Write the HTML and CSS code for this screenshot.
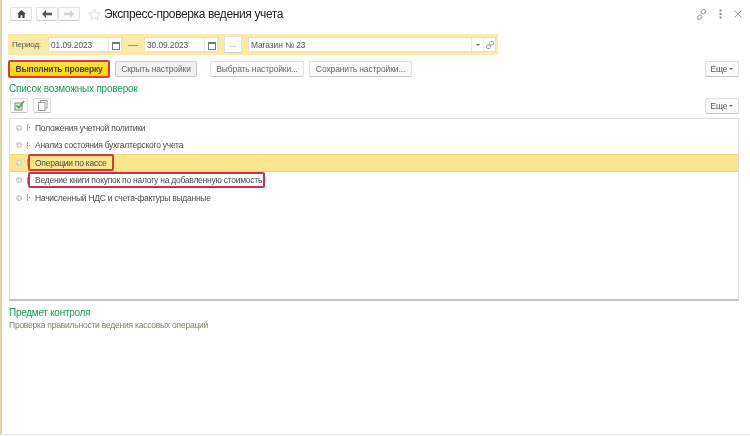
FILE: index.html
```html
<!DOCTYPE html>
<html lang="ru">
<head>
<meta charset="utf-8">
<title>Экспресс-проверка ведения учета</title>
<link rel="stylesheet" href="styles.css">
</head>
<body>
<div class="page">
  <header class="head">
    <button class="tb home"><svg width="9" height="8" viewBox="0 0 10 9"><path d="M5 0 0 4.500h1.500V9h2.500V6h2v3h2.500V4.500H10z" fill="#444"/></svg></button>
    <div class="nav">
      <button class="tb nb"><svg width="10" height="8" viewBox="0 0 10 8"><path d="M4 0 0 4l4 4V5.200h6V2.800H4z" fill="#555"/></svg></button>
      <button class="tb nb"><svg width="10" height="8" viewBox="0 0 10 8"><path d="M6 0l4 4-4 4V5.200H0V2.800h6z" fill="#d4d4d4"/></svg></button>
    </div>
    <svg class="star" width="13" height="13" viewBox="0 0 13 13"><path d="M6.500 1 8.200 4.800l4.100.4-3.100 2.700.9 4-3.600-2.100-3.600 2.100.9-4L.7 5.200l4.100-.4z" fill="#fff" stroke="#dedede"/></svg>
    <h1 class="title">Экспресс-проверка ведения учета</h1>
    <div class="winbtns">
      <svg width="11" height="11" viewBox="0 0 11 11"><g fill="none" stroke="#999"><rect x="5" y="1" width="4.500" height="3.500" rx="1.500" transform="rotate(-45 7.250 2.750)"/><rect x="1.500" y="6.500" width="4.500" height="3.500" rx="1.500" transform="rotate(-45 3.750 8.250)"/></g></svg>
      <svg width="3" height="10" viewBox="0 0 3 10"><path d="M.5.500h2v2h-2zM.5 4h2v2h-2zM.5 7.500h2v2h-2z" fill="#888"/></svg>
      <svg width="8" height="8" viewBox="0 0 8 8"><path d="M.5.500l7 7M7.500.500l-7 7" stroke="#999" fill="none"/></svg>
    </div>
  </header>

  <div class="filter">
    <span class="lbl">Период:</span>
    <div class="field date"><span class="val">01.09.2023</span><i class="cal"></i></div>
    <span class="dash">—</span>
    <div class="field date"><span class="val">30.09.2023</span><i class="cal"></i></div>
    <button class="dots">...</button>
    <div class="field shop"><span class="val">Магазин № 23</span><span class="drop"><b class="tri"></b></span><span class="link"><svg width="8" height="8" viewBox="0 0 8 8"><g fill="none" stroke="#999"><rect x="3.500" y=".5" width="4" height="3.500" rx="1.200"/><rect x=".5" y="4" width="4" height="3.500" rx="1.200"/></g></svg></span></div>
  </div>

  <div class="actions">
    <button class="btn primary">Выполнить проверку</button>
    <button class="btn pressed">Скрыть настройки</button>
    <button class="btn sel">Выбрать настройки...</button>
    <button class="btn save">Сохранить настройки...</button>
    <button class="btn more">Еще <b class="tri"></b></button>
  </div>

  <h2 class="sec">Список возможных проверок</h2>

  <div class="tools">
    <button class="btn ic"><svg width="11" height="11" viewBox="0 0 11 11"><rect x="1" y="3" width="7" height="7" fill="#e4e8cc" stroke="#7f8f7f"/><path d="M2.500 5.500 5 7.500 10 1" fill="none" stroke="#4ba860" stroke-width="1.800"/></svg></button>
    <button class="btn ic"><svg width="11" height="11" viewBox="0 0 11 11"><rect x="3.500" y=".5" width="6.500" height="7.500" fill="#fff" stroke="#999"/><rect x="1.500" y="2.500" width="6.500" height="8" fill="#fff" stroke="#999"/></svg></button>
    <button class="btn more">Еще <b class="tri"></b></button>
  </div>

  <div class="tree">
    <div class="row"><i class="plus"></i><i class="doc"></i><span class="txt">Положения учетной политики</span></div>
    <div class="row"><i class="plus"></i><i class="doc"></i><span class="txt">Анализ состояния бухгалтерского учета</span></div>
    <div class="row cur"><i class="plus"></i><i class="doc"></i><span class="txt mark wide">Операции по кассе</span></div>
    <div class="row"><i class="plus"></i><i class="doc"></i><span class="txt mark">Ведение книги покупок по налогу на добавленную стоимость</span></div>
    <div class="row"><i class="plus"></i><i class="doc"></i><span class="txt">Начисленный НДС и счета-фактуры выданные</span></div>
  </div>

  <h2 class="sec subj">Предмет контроля</h2>
  <p class="desc">Проверка правильности ведения кассовых операций</p>
</div>
</body>
</html>
```
FILE: styles.css
```css
* { box-sizing: border-box; }
html, body { margin: 0; padding: 0; }
body { width: 750px; height: 436px; background: #fff; font-family: "Liberation Sans", Arial, sans-serif; color: #333; overflow: hidden; }
button { font-family: inherit; margin: 0; padding: 0; }
.page { height: 435px; border-left: 2px solid #ddd8a4; border-bottom: 1px solid #e6e6e6; padding: 6px 11px 0 7px; filter: blur(.3px); }

.head { display: flex; align-items: center; height: 16px; padding-left: 1px; }
.tb { display: flex; align-items: center; justify-content: center; height: 14px; background: #fbfbfb; border: 1px solid #e2e2e2; border-bottom-color: #cdcdcd; border-radius: 2px; }
.home { width: 22px; }
.nav { display: flex; margin-left: 4px; }
.nb { width: 22px; }
.star { margin-left: 8px; }
.title { margin: 0 0 0 3px; font-size: 12px; letter-spacing: -.38px; font-weight: normal; color: #222; flex: 1; }
.winbtns { display: flex; align-items: center; gap: 12px; margin-right: -3px; }

.filter { display: flex; align-items: center; width: 490px; height: 21px; margin: 12px 0 0 -1px; padding-left: 4px; background: #fbeaa8; }
.lbl { font-size: 8px; letter-spacing: -.2px; color: #555; width: 36px; }
.field { display: flex; align-items: center; height: 15px; background: #fff; border: 1px solid #e8e0b8; font-size: 8.400px; letter-spacing: -.08px; color: #555; }
.val { padding-left: 2px; flex: 1; }
.date { width: 74px; }
.cal { position: relative; display: block; width: 13px; height: 13px; border-left: 1px solid #e8e8e8; }
.cal::after { content: ""; position: absolute; left: 3px; top: 4px; width: 6px; height: 5px; border: 1px solid #777; border-top-width: 2px; }
.dash { width: 22px; text-align: center; font-size: 10px; color: #777; }
.dots { width: 18px; height: 17px; margin-left: 6px; background: #fbfbfb; border: 1px solid #e2e2e2; border-bottom-color: #cdcdcd; font-size: 8px; color: #888; }
.shop { width: 248px; margin-left: 6px; }
.drop, .link { display: flex; align-items: center; justify-content: center; width: 12px; height: 13px; border-left: 1px solid #e8e8e8; }
.tri { display: inline-block; width: 0; height: 0; border: 2px solid transparent; border-top: 2px solid #666; border-bottom: 0; vertical-align: middle; }

.btn { display: inline-flex; align-items: center; justify-content: center; height: 16px; background: #fbfbfb; border: 1px solid #e0e0e0; border-bottom-color: #c4c4c4; border-radius: 2px; font-size: 8.500px; letter-spacing: -.12px; color: #666; white-space: nowrap; }
.actions { display: flex; align-items: center; height: 18px; margin: 5px 0 0 -1px; }
.primary { width: 102px; height: 18px; background: linear-gradient(#ffe34a, #fdd400); border: 2px solid #d93a3a; border-radius: 2px; font-weight: bold; letter-spacing: -.2px; color: #444; }
.pressed { width: 82px; margin-left: 5px; background: #f2f2f2; border-color: #cacaca; }
.sel { width: 94px; margin-left: 13px; }
.save { width: 103px; margin-left: 5px; }
.more { width: 34px; margin-left: auto; gap: 2px; color: #555; }

.sec { margin: 0; font-size: 10px; letter-spacing: -.2px; font-weight: normal; color: #189a58; line-height: 13px; }
.actions + .sec { margin-top: 4px; }
.tools { display: flex; align-items: center; height: 15px; margin-top: 3px; gap: 5px; }
.ic { width: 18px; height: 15px; margin-left: 1px; }
.ic + .ic { margin-left: 0; }

.tree { height: 183px; margin-top: 5px; border: 1px solid #dedede; border-bottom: 2px solid #c4c4c4; }
.row { display: flex; align-items: center; height: 17.500px; padding-left: 6px; font-size: 8.500px; letter-spacing: -.25px; color: #4a4a4a; }
.cur { background: #fbe68f; border-top: 1px solid #f0d878; border-bottom: 1px solid #f0d878; }
.plus { position: relative; display: block; width: 6px; height: 6px; border-radius: 50%; background: #cfcfcf; }
.plus::before { content: ""; position: absolute; left: 1px; top: 2.500px; width: 4px; height: 1px; background: #f4f4f4; }
.plus::after { content: ""; position: absolute; left: 2.500px; top: 1px; width: 1px; height: 4px; background: #f4f4f4; }
.doc { display: block; width: 3px; height: 7px; margin-left: 5px; border-left: 1px solid #aaa; position: relative; }
.doc::after { content: ""; position: absolute; left: 1px; top: 3px; width: 1px; height: 1px; background: #666; }
.txt { margin-left: 5px; white-space: nowrap; }
.mark { position: relative; z-index: 1; margin-left: -2px; padding: 0 1px 0 5px; height: 16px; display: flex; align-items: center; border: 2px solid #c8324a; border-radius: 2px; }
.wide { padding-right: 6px; height: 17px; border-color: #d4402f; }

.subj { margin-top: 5px; letter-spacing: -.28px; }
.desc { margin: 1px 0 0; font-size: 8.500px; letter-spacing: -.23px; line-height: 10px; color: #80806a; }
```
